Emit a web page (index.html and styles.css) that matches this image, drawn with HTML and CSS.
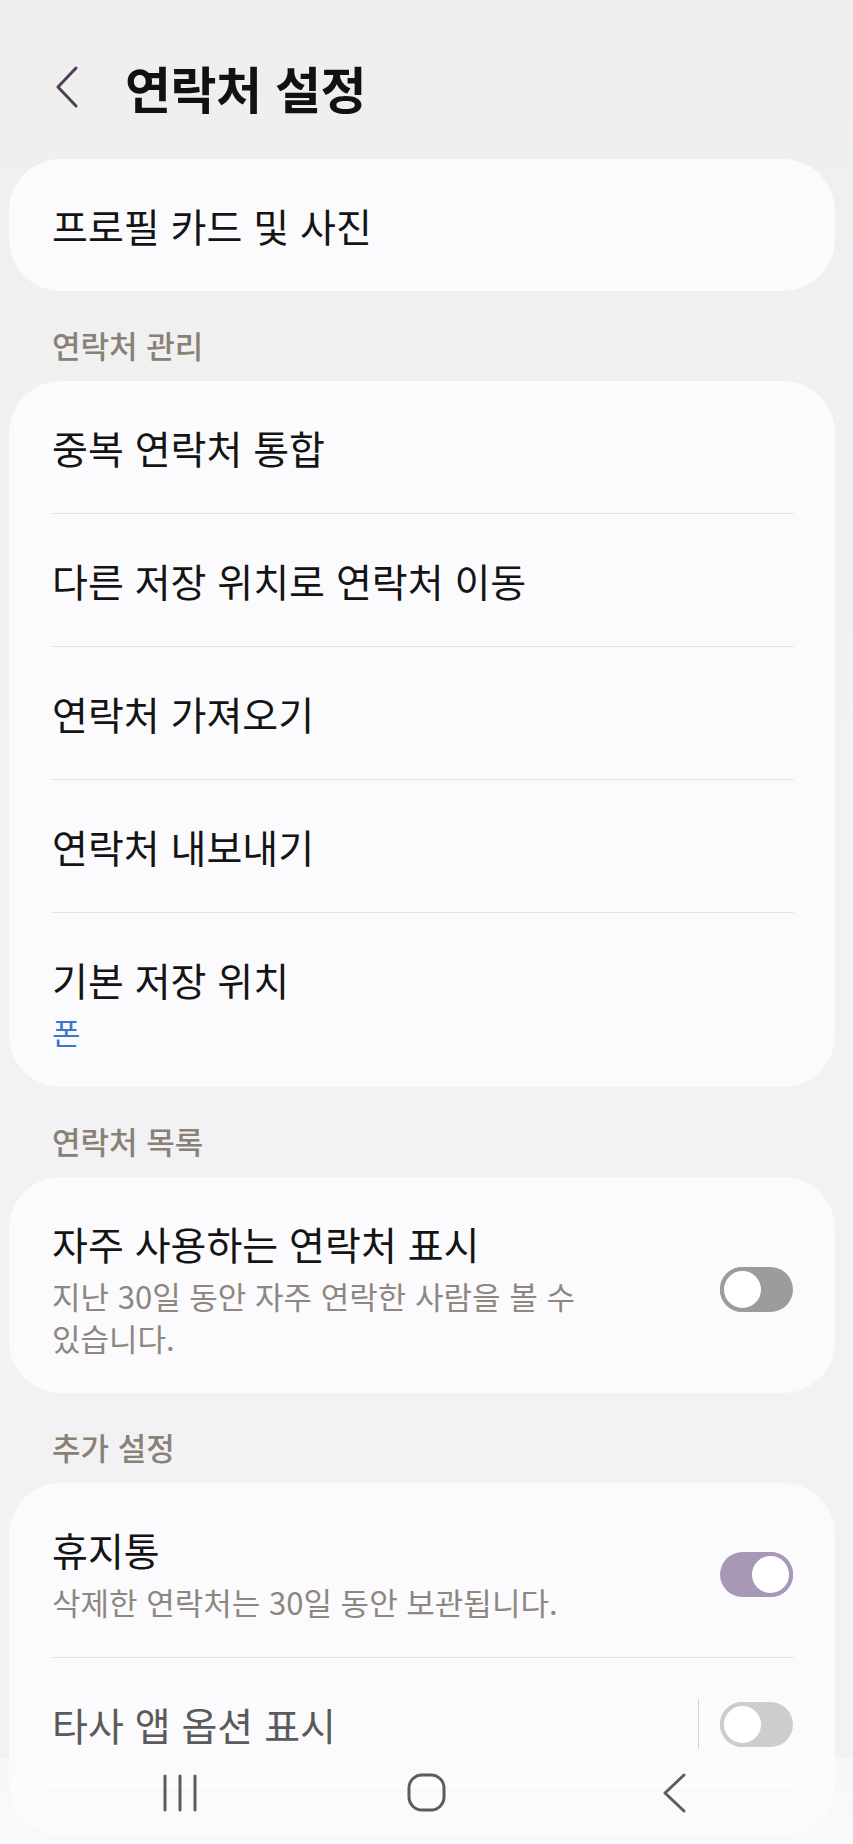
FILE: index.html
```html
<!DOCTYPE html>
<html lang="ko">
<head>
<meta charset="utf-8">
<title>연락처 설정</title>
<link rel="stylesheet" href="styles.css">
</head>
<body>
<div class="page">
  <header class="header">
    <svg class="back" width="24" height="42" viewBox="0 0 24 42"><path d="M21 2 L3 21 L21 40" fill="none" stroke="#4a4058" stroke-width="3" stroke-linecap="round" stroke-linejoin="round"/></svg>
    <h1 class="title">연락처 설정</h1>
  </header>

  <section class="card">
    <div class="row single first">프로필 카드 및 사진</div>
  </section>

  <div class="section-title">연락처 관리</div>
  <section class="card">
    <div class="row first">중복 연락처 통합</div>
    <div class="row">다른 저장 위치로 연락처 이동</div>
    <div class="row">연락처 가져오기</div>
    <div class="row">연락처 내보내기</div>
    <div class="row sub-row">
      <div class="text">
        <div class="label">기본 저장 위치</div>
        <div class="sub blue">폰</div>
      </div>
    </div>
  </section>

  <div class="section-title">연락처 목록</div>
  <section class="card">
    <div class="row sub-row first">
      <div class="text narrow">
        <div class="label">자주 사용하는 연락처 표시</div>
        <div class="sub">지난 30일 동안 자주 연락한 사람을 볼 수 있습니다.</div>
      </div>
      <div class="toggle off"><span class="thumb"></span></div>
    </div>
  </section>

  <div class="section-title">추가 설정</div>
  <section class="card last-card">
    <div class="row sub-row first">
      <div class="text">
        <div class="label">휴지통</div>
        <div class="sub">삭제한 연락처는 30일 동안 보관됩니다.</div>
      </div>
      <div class="toggle on"><span class="thumb"></span></div>
    </div>
    <div class="row faded">
      <div class="label">타사 앱 옵션 표시</div>
      <span class="vdiv"></span>
      <div class="toggle dim"><span class="thumb"></span></div>
    </div>
    <div class="row tail"></div>
  </section>
</div>

<nav class="navbar">
  <div class="nav-item">
    <svg width="36" height="38" viewBox="0 0 36 38"><path d="M3 2 V36 M18 2 V36 M33 2 V36" stroke="#5c5c5e" stroke-width="3" stroke-linecap="round"/></svg>
  </div>
  <div class="nav-item">
    <svg width="40" height="40" viewBox="0 0 40 40"><rect x="2" y="2" width="35" height="35" rx="13" fill="none" stroke="#5c5c5e" stroke-width="3"/></svg>
  </div>
  <div class="nav-item">
    <svg width="26" height="40" viewBox="0 0 26 40"><path d="M23 2 L4 20 L23 38" fill="none" stroke="#5c5c5e" stroke-width="3" stroke-linecap="round" stroke-linejoin="round"/></svg>
  </div>
</nav>
</body>
</html>
```

FILE: styles.css
```css
html, body {
  margin: 0;
  padding: 0;
}

body {
  width: 853px;
  min-height: 1844px;
  background: linear-gradient(#efeeec 0px, #f0f0f0 300px, #f2f2f4 900px, #f2f2f4 100%);
  font-family: "Noto Sans CJK KR", "Noto Sans", sans-serif;
  color: #141414;
  overflow: hidden;
  word-break: keep-all;
}

.page {
  padding-bottom: 10px;
}

.header {
  display: flex;
  align-items: center;
  height: 66px;
  padding: 54px 0 0 55px;
  margin-bottom: 39px;
}

.back {
  display: block;
  margin-right: 46px;
}

.title {
  margin: 0;
  font-size: 50px;
  line-height: 66px;
  font-weight: 700;
  color: #111111;
  letter-spacing: -0.5px;
}

.card {
  margin: 0 18px 0 9px;
  background: #fbfbfd;
  border-radius: 52px;
  overflow: hidden;
}

.row {
  margin: 0 41px 0 42px;
  padding: 0 1px;
  height: 132px;
  display: flex;
  align-items: center;
  font-size: 39px;
  line-height: 48px;
  font-weight: 400;
  border-top: 1px solid #e4e4e6;
}

.row.first {
  border-top: none;
}

.row.sub-row {
  height: auto;
  padding-top: 42px;
  padding-bottom: 34px;
}

.text {
  flex: 1;
}

.text.narrow {
  flex: 0 1 auto;
  max-width: 580px;
}

.label {
  font-size: 39px;
  line-height: 48px;
}

.sub {
  margin-top: 8px;
  font-size: 31px;
  line-height: 42px;
  font-weight: 400;
  color: #8d877f;
}

.sub.blue {
  color: #3a76cf;
}

.section-title {
  padding: 36px 52px 18px;
  font-size: 31px;
  line-height: 36px;
  font-weight: 500;
  color: #8a8176;
}

.toggle {
  position: relative;
  flex: none;
  margin-left: auto;
  width: 73px;
  height: 45px;
  border-radius: 23px;
  background: #9c9c9e;
}

.thumb {
  position: absolute;
  top: 0;
  left: 0;
  width: 45px;
  height: 45px;
  box-sizing: border-box;
  border-radius: 50%;
  background: #ffffff;
  border: 4px solid #9c9c9e;
}

.toggle.on {
  background: #a898b8;
}

.toggle.on .thumb {
  left: auto;
  right: 0;
  border-color: #a898b8;
}

.toggle.dim {
  background: #cdcdcf;
  margin-left: 0;
}

.toggle.dim .thumb {
  border-color: #cdcdcf;
}

.row.faded .label {
  color: #5a5a5a;
}

.vdiv {
  margin-left: auto;
  margin-right: 21px;
  width: 1px;
  height: 50px;
  background: #d4d4d6;
}

.row.tail {
  height: 44px;
}

.navbar {
  position: fixed;
  left: 0;
  right: 0;
  bottom: 0;
  height: 86px;
  display: grid;
  grid-template-columns: repeat(3, 247px);
  justify-content: center;
  align-items: center;
  padding-bottom: 16px;
  box-sizing: border-box;
  background: linear-gradient(rgba(251, 251, 253, 0.55), rgba(251, 251, 253, 0.8));
}

.nav-item {
  display: flex;
  justify-content: center;
  align-items: center;
}

.nav-item svg {
  display: block;
}
```
